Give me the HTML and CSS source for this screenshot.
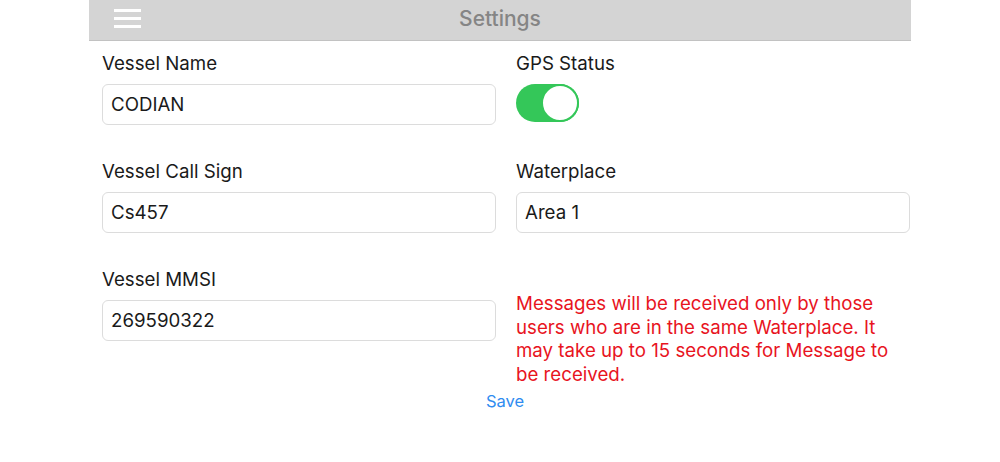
FILE: index.html
```html
<!DOCTYPE html>
<html lang="en">
<head>
    <meta charset="UTF-8">
    <meta name="viewport" content="width=device-width, initial-scale=1.0">
    <title>Settings</title>
    <link rel="stylesheet" href="styles.css">
</head>
<body>
    <div class="page">
        <div class="top-bar">
            <div class="menu-btn">
                <span></span><span></span><span></span>
            </div>
            <div class="title">Settings</div>
        </div>

        <div class="settings-form">
            <div class="field">
                <label>Vessel Name</label>
                <div class="input">CODIAN</div>
            </div>
            <div class="field">
                <label>GPS Status</label>
                <div class="toggle"><div class="knob"></div></div>
            </div>

            <div class="field">
                <label>Vessel Call Sign</label>
                <div class="input">Cs457</div>
            </div>
            <div class="field">
                <label>Waterplace</label>
                <div class="input">Area 1</div>
            </div>

            <div class="field">
                <label>Vessel MMSI</label>
                <div class="input">269590322</div>
            </div>
            <div class="notice">
                Messages will be received only by those users who are in the same Waterplace. It may take up to 15 seconds for Message to be received.
            </div>
        </div>

        <div class="save-row">
            <a class="save-link">Save</a>
        </div>
    </div>
</body>
</html>
```

FILE: styles.css
```css
:root {
    --bar-color: #d4d4d4;
    --green: #34c759;
    --red: #e8141e;
    --blue: #2f8cf0;
    --text: #1a1a1a;
}

* {
    margin: 0;
    padding: 0;
    box-sizing: border-box;
}

body {
    background: #fff;
    font-family: Inter, 'Liberation Sans', Arial, sans-serif;
    color: var(--text);
}

.page {
    width: 822px;
    margin: 0 auto;
}

.top-bar {
    height: 41px;
    background: var(--bar-color);
    border-bottom: 1px solid #c2c2c2;
    display: flex;
    align-items: center;
    position: relative;
}

.menu-btn {
    display: flex;
    flex-direction: column;
    gap: 5px;
    margin-left: 25px;
    margin-top: -3px;
}

.menu-btn span {
    display: block;
    width: 27px;
    height: 3px;
    background: #fff;
}

.title {
    position: absolute;
    left: 0;
    right: 0;
    top: 6px;
    text-align: center;
    font-size: 21px;
    font-weight: 500;
    color: #858585;
    pointer-events: none;
}

.settings-form {
    display: grid;
    grid-template-columns: 394px 394px;
    column-gap: 20px;
    padding: 11px 0 0 13px;
}

.field {
    height: 108px;
}

.field label {
    display: block;
    font-size: 18.7px;
    line-height: 23px;
    margin-bottom: 9px;
}

.input {
    height: 41px;
    border: 1px solid #dcdcdc;
    border-radius: 6px;
    padding: 0 8px;
    font-size: 18.7px;
    line-height: 39px;
}

.toggle {
    width: 63px;
    height: 38px;
    border-radius: 19px;
    background: var(--green);
    position: relative;
}

.knob {
    position: absolute;
    right: 0;
    top: 0;
    width: 38px;
    height: 38px;
    border-radius: 50%;
    background: #fff;
    border: 2px solid var(--green);
}

.notice {
    color: var(--red);
    font-size: 18.7px;
    line-height: 23.5px;
    padding-top: 24px;
}

.save-row {
    text-align: center;
    margin-top: 5px;
    padding-left: 10px;
}

.save-link {
    color: var(--blue);
    font-size: 16.5px;
    cursor: pointer;
}
```
